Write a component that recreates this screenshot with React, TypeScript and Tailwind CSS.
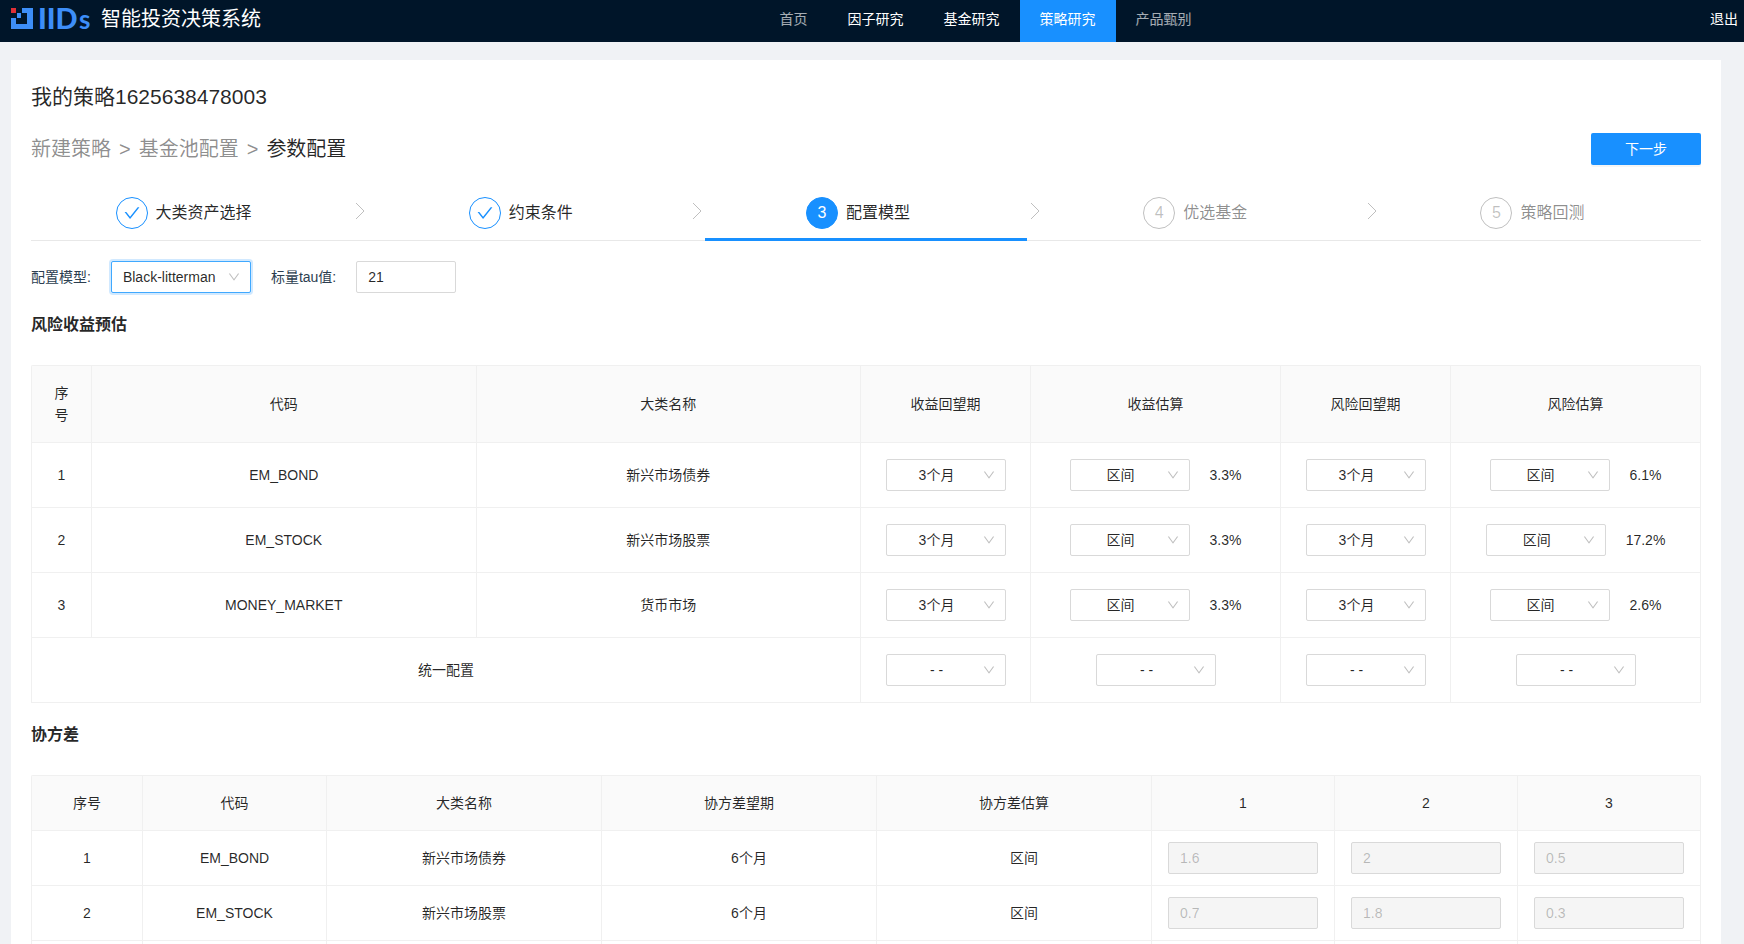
import {useState} from "react";

interface SelectBoxProps {
    label: string
    options: string[]
    defaultValue: string
    className?: string
}

interface Asset {
    code: string
    name: string
    income: string
    risk: string
    covariance: string[]
}

const navItems=[
    {label: "首页", tone: "text-white/65"},
    {label: "因子研究", tone: "text-white"},
    {label: "基金研究", tone: "text-white"},
    {label: "策略研究", tone: "bg-[#1890ff] text-white"},
    {label: "产品甄别", tone: "text-white/65"},
];

const steps=["大类资产选择", "约束条件", "配置模型", "优选基金", "策略回测"];
const currentStep=2;

const assets: Asset[]=[
    {code: "EM_BOND", name: "新兴市场债券", income: "3.3%", risk: "6.1%", covariance: ["1.6", "2", "0.5"]},
    {code: "EM_STOCK", name: "新兴市场股票", income: "3.3%", risk: "17.2%", covariance: ["0.7", "1.8", "0.3"]},
    {code: "MONEY_MARKET", name: "货币市场", income: "3.3%", risk: "2.6%", covariance: ["0.5", "0.3", "1.2"]},
];

const periods=["3个月", "6个月", "12个月"];
const methods=["区间", "均值"];

const th="border-r border-b border-[#f0f0f0] bg-[#fafafa] px-5 py-4 font-normal";
const td="border-r border-b border-[#f0f0f0] px-4";

const Logo=() => (
    <svg width="22" height="42" viewBox="0 -8 22 42" aria-hidden="true">
        <path d="M0 0h5v5H0z" fill="#e02f35" />
        <path d="M11 0h11v21H0V10h5v6h11V5h-5z" fill="#3d8ef8" />
        <path d="M6 5h4v5H6z" fill="#3d8ef8" />
    </svg>
);

const DownIcon=({className}: {className: string}) => (
    <svg className={className} width="12" height="12" viewBox="64 64 896 896" fill="#bfbfbf" aria-hidden="true">
        <path d="M884 256h-75c-5.100 0-9.900 2.500-12.900 6.600L512 654.200 227.900 262.600c-3-4.100-7.800-6.600-12.900-6.600h-75c-6.500 0-10.300 7.400-6.500 12.700l352.600 486.100c12.800 17.600 39 17.600 51.700 0l352.600-486.100c3.900-5.300.1-12.700-6.400-12.700z" />
    </svg>
);

const CheckIcon=() => (
    <svg width="16" height="16" viewBox="64 64 896 896" fill="currentColor" aria-hidden="true">
        <path d="M912 190h-69.900c-9.800 0-19.100 4.500-25.100 12.200L404.700 724.500 207 474a32 32 0 0 0-25.100-12.200H112c-6.700 0-10.400 7.700-6.300 12.900l273.900 347c12.800 16.200 37.400 16.200 50.300 0l488.400-618.900c4.100-5.100.4-12.800-6.300-12.800z" />
    </svg>
);

const SelectBox=({label, options, defaultValue, className="w-[120px] border-[#d9d9d9] text-center"}: SelectBoxProps) => (
    <div className="relative inline-block">
        <select aria-label={label} defaultValue={defaultValue} className={`h-8 appearance-none rounded-xs border bg-white pr-[29px] pl-[11px] outline-none ${className}`}>
            {options.map((option) => <option key={option}>{option}</option>)}
        </select>
        <DownIcon className="pointer-events-none absolute top-[10px] right-[11px]" />
    </div>
);

const Header=() => (
    <header className="flex h-[42px] justify-between bg-[#001529] pr-1.5 pl-[11px] leading-[38px] text-white">
        <div className="flex">
            <Logo />
            <svg className="ml-1" width="56" height="42" viewBox="-2 0 56 42" role="img" aria-label="IIDs">
                <g fill="#3d8ef8" fontFamily="Lato" fontWeight="900">
                    <text x="-1" y="29" fontSize="29">IID</text>
                    <text x="40" y="29" fontSize="26" fontWeight="700">s</text>
                </g>
            </svg>
            <h1 className="ml-2 text-xl leading-[38px]">智能投资决策系统</h1>
        </div>
        <nav className="flex">
            {navItems.map((item) => (
                <a key={item.label} href="#" className={`px-5 ${item.tone}`}>{item.label}</a>
            ))}
        </nav>
        <a href="#">退出</a>
    </header>
);

const Steps=() => (
    <div className="border-b border-[#e8e8e8]">
        <ol className="-mx-2 grid grid-cols-5">
            {steps.map((step, i) => (
                <li key={step} className="relative flex h-[51px]">
                    <div className="flex flex-1 items-start justify-center gap-2 pt-2 pr-4 text-base leading-8">
                        <span className={`flex size-8 items-center justify-center rounded-full border ${i<currentStep? "border-[#1890ff] text-[#1890ff]": i===currentStep? "border-[#1890ff] bg-[#1890ff] text-white": "border-black/25 text-black/25"}`}>
                            {i<currentStep? <CheckIcon />: i+1}
                        </span>
                        <span className={i>currentStep? "text-black/45": "text-black/85"}>{step}</span>
                    </div>
                    {i<steps.length-1 && (
                        <svg className="-mx-1.5 mt-3" width="12" height="20" viewBox="0 0 12 20" fill="none" stroke="#bfbfbf" aria-hidden="true">
                            <path d="M2 2l8 8-8 8" />
                        </svg>
                    )}
                    {i===currentStep && <span className="absolute inset-x-2 -bottom-px h-[3px] bg-[#1890ff]" />}
                </li>
            ))}
        </ol>
    </div>
);

const RiskTable=() => (
    <table className="w-full table-fixed border-separate border-spacing-0 rounded-t-xs border-t border-l border-[#f0f0f0] text-center leading-[22px]">
        <colgroup>
            <col className="w-[60px]" />
            <col />
            <col />
            <col className="w-[170px]" />
            <col className="w-[250px]" />
            <col className="w-[170px]" />
            <col className="w-[250px]" />
        </colgroup>
        <thead>
            <tr>
                {["序号", "代码", "大类名称", "收益回望期", "收益估算", "风险回望期", "风险估算"].map((title) => (
                    <th key={title} className={th}>{title}</th>
                ))}
            </tr>
        </thead>
        <tbody>
            {assets.map((asset, i) => (
                <tr key={asset.code} className="h-[65px]">
                    <td className={td}>{i+1}</td>
                    <td className={td}>{asset.code}</td>
                    <td className={td}>{asset.name}</td>
                    <td className={td}><SelectBox label="收益回望期" options={periods} defaultValue="3个月" /></td>
                    <td className={td}>
                        <div className="flex items-center justify-center gap-5">
                            <SelectBox label="收益估算" options={methods} defaultValue="区间" />
                            <span>{asset.income}</span>
                        </div>
                    </td>
                    <td className={td}><SelectBox label="风险回望期" options={periods} defaultValue="3个月" /></td>
                    <td className={td}>
                        <div className="flex items-center justify-center gap-5">
                            <SelectBox label="风险估算" options={methods} defaultValue="区间" />
                            <span>{asset.risk}</span>
                        </div>
                    </td>
                </tr>
            ))}
            <tr className="h-[65px]">
                <td colSpan={3} className={td}>统一配置</td>
                <td className={td}><SelectBox label="统一收益回望期" options={["- -", ...periods]} defaultValue="- -" /></td>
                <td className={td}><SelectBox label="统一收益估算" options={["- -", ...methods]} defaultValue="- -" /></td>
                <td className={td}><SelectBox label="统一风险回望期" options={["- -", ...periods]} defaultValue="- -" /></td>
                <td className={td}><SelectBox label="统一风险估算" options={["- -", ...methods]} defaultValue="- -" /></td>
            </tr>
        </tbody>
    </table>
);

const CovarianceTable=() => (
    <table className="w-full table-fixed border-separate border-spacing-0 rounded-t-xs border-t border-l border-[#f0f0f0] text-center leading-[22px]">
        <colgroup>
            <col className="w-[111px]" />
            <col className="w-[184px]" />
            <col className="w-[275px]" />
            <col className="w-[275px]" />
            <col className="w-[275px]" />
            <col className="w-[183px]" />
            <col className="w-[183px]" />
            <col className="w-[183px]" />
        </colgroup>
        <thead>
            <tr>
                {["序号", "代码", "大类名称", "协方差望期", "协方差估算", "1", "2", "3"].map((title) => (
                    <th key={title} className={th}>{title}</th>
                ))}
            </tr>
        </thead>
        <tbody>
            {assets.map((asset, i) => (
                <tr key={asset.code} className="h-[55px]">
                    <td className={td}>{i+1}</td>
                    <td className={td}>{asset.code}</td>
                    <td className={td}>{asset.name}</td>
                    <td className={`${td} pl-9`}>6个月</td>
                    <td className={`${td} pl-9`}>区间</td>
                    {asset.covariance.map((value, j) => (
                        <td key={j} className={td}>
                            <input disabled aria-label={`${asset.name} ${j+1}`} defaultValue={value} className="block h-8 w-full rounded-xs border border-[#d9d9d9] bg-[#f5f5f5] px-[11px] text-black/25" />
                        </td>
                    ))}
                </tr>
            ))}
        </tbody>
    </table>
);

const App=() => {
    const [tau, setTau]=useState("21");

    return (
        <div className="min-h-screen bg-[#f0f2f5] font-['Liberation_Sans','Noto_Sans_CJK_SC',sans-serif] text-sm text-black/85">
            <Header />
            <main className="pt-[18px] pr-[23px] pl-[11px]">
                <div className="bg-white px-5 pt-[21px] pb-6">
                    <h2 className="text-[21px] leading-8">我的策略1625638478003</h2>
                    <div className="mt-5 flex items-center justify-between">
                        <nav className="flex gap-2 text-xl leading-8 text-black/45">
                            <a href="#">新建策略</a>
                            <span>&gt;</span>
                            <a href="#">基金池配置</a>
                            <span>&gt;</span>
                            <span className="text-black/85">参数配置</span>
                        </nav>
                        <button className="h-8 w-[110px] rounded-xs bg-[#1890ff] text-white shadow-[0_2px_0_rgba(0,0,0,0.04)]">下一步</button>
                    </div>
                    <div className="mt-6">
                        <Steps />
                    </div>
                    <form className="mt-5 flex items-center gap-5 text-[#2c3e50]">
                        <span>配置模型:</span>
                        <SelectBox
                            label="配置模型"
                            options={["Black-litterman", "风险平价"]}
                            defaultValue="Black-litterman"
                            className="w-[140px] border-[#40a9ff] text-black/85 shadow-[0_0_0_2px_rgba(24,144,255,0.2)]"
                        />
                        <label htmlFor="tau">标量tau值:</label>
                        <input id="tau" value={tau} onChange={(e) => setTau(e.target.value)} className="h-8 w-[100px] rounded-xs border border-[#d9d9d9] px-[11px] text-black/85 outline-none" />
                    </form>
                    <h3 className="mt-5 mb-7 text-base leading-6 font-bold">风险收益预估</h3>
                    <RiskTable />
                    <h3 className="mt-5 mb-7 text-base leading-6 font-bold">协方差</h3>
                    <CovarianceTable />
                </div>
            </main>
        </div>
    );
}

export default App;
